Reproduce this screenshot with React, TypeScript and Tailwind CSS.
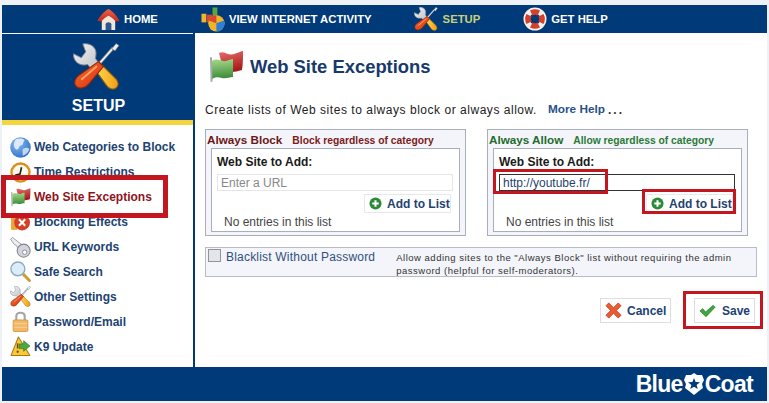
import React from 'react';

const IconTools = ({ className }: { className?: string }) => (
  <svg viewBox="0 0 48 48" className={className}>
    <defs>
      <linearGradient id="toolYellow" x1="0" y1="0" x2="1" y2="0">
        <stop offset="0" stopColor="#ffdc5a" />
        <stop offset="1" stopColor="#f29f12" />
      </linearGradient>
      <linearGradient id="toolRed" x1="0" y1="0" x2="1" y2="1">
        <stop offset="0" stopColor="#f8732c" />
        <stop offset="1" stopColor="#d92a12" />
      </linearGradient>
      <linearGradient id="toolSilver" x1="0" y1="0" x2="1" y2="1">
        <stop offset="0" stopColor="#f4f5f6" />
        <stop offset="1" stopColor="#b4b8be" />
      </linearGradient>
    </defs>
    {/* screwdriver shaft */}
    <path d="M27 21 L41 5" stroke="#7d828a" strokeWidth="3.2" />
    <path d="M27 21 L41 5" stroke="#f4f5f6" strokeWidth="1.6" />
    <path d="M39.5 6 L44 0.5 L47 2.5 L43 8 Z" fill="#eceef0" stroke="#70757c" strokeWidth="0.8" />
    {/* wrench */}
    <path d="M0.5 11 L8.5 15 L13 9 L10 1 C17 -0.5 24 4 23.5 11 L23 16 L30 25 L22 31 L15 22 C8 24 0 20 0.5 11 Z" fill="url(#toolSilver)" stroke="#80858c" strokeWidth="1" />
    <path d="M21 25 L27 20 L44 37 C47.5 41 46 45 43 46.5 C40 48 36 46 34 43 Z" fill="url(#toolYellow)" stroke="#93610a" strokeWidth="1.1" />
    {/* screwdriver handle */}
    <path d="M26 19 L31 24 L17 41 C13 46 7 47.5 3.5 44.5 C0 41 2 36 6 33 Z" fill="url(#toolRed)" stroke="#8a2608" strokeWidth="1.1" />
    <path d="M24 24 L9 37" stroke="#fda66c" strokeWidth="1.8" strokeLinecap="round" />
  </svg>
);

const IconFlag = ({ className }: { className?: string }) => (
  <svg viewBox="0 0 36 34" className={className}>
    <defs>
      <linearGradient id="flagRed" x1="0" y1="0" x2="0.3" y2="1">
        <stop offset="0" stopColor="#e87070" />
        <stop offset="1" stopColor="#a81c1c" />
      </linearGradient>
      <linearGradient id="flagGreen" x1="0" y1="0" x2="0.1" y2="1">
        <stop offset="0" stopColor="#a8dc8c" />
        <stop offset="1" stopColor="#3d8c3a" />
      </linearGradient>
    </defs>
    <path d="M11 3 C16 0 20 6 26 4 C30 3 33 1 35 1 C35 8 35 14 34 20 C30 21 27 22 24 22 L14 15 Z" fill="url(#flagRed)" />
    <path d="M4 11 C9 7 14 12 18 11 C21 10 23 9 25 9 L25 27 C21 27 18 29 14 28 C10 27 7 27 4 29 Z" fill="url(#flagGreen)" />
    <path d="M3 8 L3.5 31" stroke="#a6acaa" strokeWidth="2" strokeLinecap="round" />
  </svg>
);

const IconHome = ({ className }: { className?: string }) => (
  <svg viewBox="0 0 24 24" className={className}>
    <defs>
      <linearGradient id="homeRoof" x1="0" y1="0" x2="0" y2="1">
        <stop offset="0" stopColor="#f0604c" />
        <stop offset="1" stopColor="#c42a1c" />
      </linearGradient>
    </defs>
    <path d="M5 12 L12 7 L19 12 V23 H5 Z" fill="#efe8da" />
    <path d="M9 23 V17 C9 14 15 14 15 17 V23 Z" fill="#33558f" />
    <path d="M0.5 13.5 C3 8 8 3 12 1 C16 3 21 8 23.5 13.5 L19.5 14 C17 11 14.5 9 12 8 C9.5 9 7 11 4.5 14 Z" fill="url(#homeRoof)" />
  </svg>
);

const IconChart = ({ className }: { className?: string }) => (
  <svg viewBox="0 0 26 26" className={className}>
    <rect x="0.5" y="7" width="5" height="9" fill="#efb52c" />
    <rect x="6" y="8" width="5.5" height="8" fill="#d9482c" />
    <rect x="12" y="0.5" width="5" height="12" fill="#5ea63c" />
    <circle cx="16" cy="17" r="8.5" fill="#f0b428" />
    <path d="M16 17 L8 14 A8.5 8.5 0 0 1 16 8.5 Z" fill="#d9472c" />
    <path d="M16 17 L24 14 A8.5 8.5 0 0 1 16 25.5 Z" fill="#2f7fd6" />
  </svg>
);

const IconBuoy = ({ className }: { className?: string }) => (
  <svg viewBox="0 0 24 24" className={className}>
    <circle cx="12" cy="12" r="8.5" fill="#003a78" stroke="#f6f2ee" strokeWidth="6" />
    <path d="M7 3.5 A10.5 10.5 0 0 1 17 3.5 L14.5 8.5 A4.5 4.5 0 0 0 9.5 8.5 Z" fill="#d6402a" />
    <path d="M7 20.5 A10.5 10.5 0 0 0 17 20.5 L14.5 15.5 A4.5 4.5 0 0 1 9.5 15.5 Z" fill="#d6402a" />
    <path d="M3.5 7 A10.5 10.5 0 0 0 3.5 17 L8.5 14.5 A4.5 4.5 0 0 1 8.5 9.5 Z" fill="#d6402a" />
    <path d="M20.5 7 A10.5 10.5 0 0 1 20.5 17 L15.5 14.5 A4.5 4.5 0 0 0 15.5 9.5 Z" fill="#d6402a" />
  </svg>
);

const IconGlobe = ({ className }: { className?: string }) => (
  <svg viewBox="0 0 20 20" className={className}>
    <defs>
      <radialGradient id="globeBlue" cx="0.35" cy="0.3" r="0.8">
        <stop offset="0" stopColor="#8cbcf0" />
        <stop offset="1" stopColor="#2a6cc4" />
      </radialGradient>
    </defs>
    <circle cx="10" cy="10" r="9.8" fill="url(#globeBlue)" />
    <path d="M6 2 C9 1 12 1 14 3 C12 5 13 8 10 8 C8 9 9 12 6 12 C3 10 3 5 6 2 Z" fill="#dce9f8" />
    <path d="M13 11 C15 10 18 10 18.5 12 C17 15 14 18 12 17.5 C12.5 15 11 12 13 11 Z" fill="#c2d8f2" />
  </svg>
);

const IconClock = ({ className }: { className?: string }) => (
  <svg viewBox="0 0 20 20" className={className}>
    <circle cx="10" cy="10" r="8.6" fill="#fdf8ea" stroke="#d98f1c" strokeWidth="2.2" />
    <path d="M11 5 L9.5 11.5 L5 12.5" fill="none" stroke="#222" strokeWidth="1.6" />
  </svg>
);

const IconBlock = ({ className }: { className?: string }) => (
  <svg viewBox="0 0 20 20" className={className}>
    <rect x="1" y="2" width="6" height="15" fill="#eaa53a" />
    <circle cx="11.5" cy="10" r="7.5" fill="#d63f26" />
    <path d="M8.5 7 L14.5 13 M14.5 7 L8.5 13" stroke="#fff" strokeWidth="2" />
  </svg>
);

const IconKey = ({ className }: { className?: string }) => (
  <svg viewBox="0 0 20 20" className={className}>
    <path d="M0.5 2 L2.5 0.5 L12 8 L9 11 L7 10 L6 8 L4 7 Z" fill="#eceef2" stroke="#8d929a" strokeWidth="0.8" />
    <circle cx="13" cy="13" r="6.2" fill="#d2d5dc" stroke="#7f848c" strokeWidth="1" />
    <circle cx="14" cy="14.5" r="2.1" fill="#fff" stroke="#7f848c" strokeWidth="0.8" />
  </svg>
);

const IconSearch = ({ className }: { className?: string }) => (
  <svg viewBox="0 0 20 20" className={className}>
    <path d="M12.5 12.5 L18.5 18.5" stroke="#d09a34" strokeWidth="2.8" strokeLinecap="round" />
    <circle cx="7.5" cy="7.5" r="6.6" fill="#dcecf8" stroke="#8faabe" strokeWidth="1.3" />
  </svg>
);

const IconLock = ({ className }: { className?: string }) => (
  <svg viewBox="0 0 20 20" className={className}>
    <path d="M6 9 V5 C6 0.5 14 0.5 14 5 V9" fill="none" stroke="#a3a6a8" strokeWidth="2" />
    <rect x="3" y="8.5" width="14" height="11" rx="1" fill="#f2b868" stroke="#cf9238" strokeWidth="0.8" />
    <path d="M3.5 12 H16.5 M3.5 15.5 H16.5" stroke="#f8d49a" strokeWidth="0.8" />
  </svg>
);

const IconUpdate = ({ className }: { className?: string }) => (
  <svg viewBox="0 0 20 20" className={className}>
    <path d="M8 1 L19 18.5 H1 Z" fill="#f8c93a" stroke="#a87a14" strokeWidth="1" strokeLinejoin="round" />
    <path d="M9 7.5 H13 V4.5 L19 9.5 L13 14.5 V12 H9 Z" fill="#4fa83c" stroke="#2c7222" strokeWidth="0.6" />
    <rect x="6.5" y="7" width="1.6" height="5" fill="#7a4c0a" />
    <circle cx="7.3" cy="15" r="1.1" fill="#7a4c0a" />
  </svg>
);

const IconAdd = ({ className }: { className?: string }) => (
  <svg viewBox="0 0 14 14" className={className}>
    <circle cx="7" cy="7" r="6.5" fill="#2a8a38" />
    <path d="M7 3.5 V10.5 M3.5 7 H10.5" stroke="#fff" strokeWidth="2.2" />
  </svg>
);

const IconCross = ({ className }: { className?: string }) => (
  <svg viewBox="0 0 18 18" className={className}>
    <path d="M1 4 L4 1 L9 6 L14 1 L17 4 L12 9 L17 14 L14 17 L9 12 L4 17 L1 14 L6 9 Z" fill="#ee5a30" stroke="#b8381a" strokeWidth="0.8" strokeLinejoin="round" />
  </svg>
);

const IconCheck = ({ className }: { className?: string }) => (
  <svg viewBox="0 0 18 14" className={className}>
    <path d="M1 7 L4 4.5 L7 8 L15 1 L17 3 L7.5 13 Z" fill="#3fa83c" stroke="#1f7422" strokeWidth="0.7" strokeLinejoin="round" />
  </svg>
);

const IconBadge = ({ className }: { className?: string }) => (
  <svg viewBox="0 0 20 22" className={className}>
    <path d="M10 0 L13 2 L18 2 L20 7 L18 11 L19 15 L15 18 L10 22 L5 18 L1 15 L2 11 L0 7 L2 2 L7 2 Z" fill="#fff" />
    <path d="M10 5 L11.6 9 L16 9.2 L12.6 11.9 L13.8 16 L10 13.7 L6.2 16 L7.4 11.9 L4 9.2 L8.4 9 Z" fill="#003a78" />
  </svg>
);

const navItems = [
  { label: 'HOME', Icon: IconHome, icon: 'w-[23px] h-[23px]', wrap: 'ml-[95px] gap-[4px]', text: 'text-white' },
  { label: 'VIEW INTERNET ACTIVITY', Icon: IconChart, icon: 'w-[25px] h-[25px]', wrap: 'ml-[43px] gap-[3px]', text: 'text-white' },
  { label: 'SETUP', Icon: IconTools, icon: 'w-[24px] h-[24px]', wrap: 'ml-[42px] gap-[5px]', text: 'text-[#c9d07c]' },
  { label: 'GET HELP', Icon: IconBuoy, icon: 'w-[24px] h-[24px]', wrap: 'ml-[43px] gap-[4px]', text: 'text-white' },
];

const sideItems = [
  { label: 'Web Categories to Block', Icon: IconGlobe, active: false },
  { label: 'Time Restrictions', Icon: IconClock, active: false },
  { label: 'Web Site Exceptions', Icon: IconFlag, active: true },
  { label: 'Blocking Effects', Icon: IconBlock, active: false },
  { label: 'URL Keywords', Icon: IconKey, active: false },
  { label: 'Safe Search', Icon: IconSearch, active: false },
  { label: 'Other Settings', Icon: IconTools, active: false },
  { label: 'Password/Email', Icon: IconLock, active: false },
  { label: 'K9 Update', Icon: IconUpdate, active: false },
];

const ListBox = ({
  title,
  sub,
  titleColor,
  subColor,
  placeholder,
  value,
  inputClass,
  redBoxes,
}: {
  title: string;
  sub: string;
  titleColor: string;
  subColor: string;
  placeholder?: string;
  value?: string;
  inputClass: string;
  redBoxes?: boolean;
}) => (
  <div className="relative w-[261px] h-[107px] border border-[#a9aebd] bg-[#f4f5fa] pt-px px-[5px]">
    <div className="h-[17px] flex items-baseline -ml-[4px] whitespace-nowrap">
      <span className={`text-[11.7px] font-bold ${titleColor}`}>{title}</span>
      <span className={`ml-[10px] text-[10.3px] font-bold ${subColor}`}>{sub}</span>
    </div>
    <div className="h-[84px] border border-[#a9aebd] bg-white px-[5px] pt-[6px]">
      <div className="text-[12px] leading-[14px] font-bold text-[#1a1a1a]">Web Site to Add:</div>
      <div className={`mt-[5px] w-[236px] h-[17px] text-[12px] leading-[16px] pl-[3px] ${inputClass}`}>
        {value ?? placeholder}
      </div>
      <div className="flex justify-end mt-[3px] pr-[3px]">
        <div className="w-[87px] h-[19px] border border-[#e6e8ee] flex items-center pl-[4px] gap-[5px] whitespace-nowrap">
          <IconAdd className="w-[13px] h-[13px] shrink-0" />
          <span className="text-[12px] font-bold text-[#1f4272]">Add to List</span>
        </div>
      </div>
      <div className="ml-[7px] text-[12px] leading-[14px] mt-[2px] text-[#444]">No entries in this list</div>
    </div>
    {redBoxes && (
      <>
        <div className="absolute left-[5px] top-[39px] w-[115px] h-[25px] border-[3px] border-[#c4161f]" />
        <div className="absolute left-[154px] top-[59px] w-[94px] h-[25px] border-[3px] border-[#c4161f]" />
      </>
    )}
  </div>
);

export default function App() {
  return (
    <div className="relative w-[769px] h-[403px] bg-[#eef1f6] pt-[5px] pb-[2px] pl-[2px] pr-[2px] flex flex-col font-['Liberation_Sans',Arial,sans-serif] overflow-hidden">
      {/* Top nav */}
      <div className="h-[28px] shrink-0 bg-[#003a78] flex items-center text-[11.3px] font-bold">
        {navItems.map(({ label, Icon, icon, wrap, text }) => (
          <div key={label} className={`flex items-center ${wrap}`}>
            <Icon className={icon} />
            <span className={text}>{label}</span>
          </div>
        ))}
      </div>

      <div className="flex flex-1 min-h-0 bg-white">
        {/* Sidebar */}
        <div className="w-[191px] shrink-0 border-r-2 border-[#003a78] box-content flex flex-col">
          <div className="h-[87px] bg-[#003a78] flex flex-col items-center pt-[9px] border-t border-white">
            <IconTools className="w-[47px] h-[47px] -ml-[2px]" />
            <div className="mt-[4px] ml-[2px] text-[16px] font-bold text-white">SETUP</div>
          </div>
          <div className="h-[5px] bg-[#f4d63c]" />
          <div className="pt-[10px] pl-[8px]">
            {sideItems.map(({ label, Icon, active }) => (
              <div key={label} className="h-[24.9px] flex items-center">
                <div className="w-[24px] flex justify-start">
                  <Icon className="w-[21px] h-[21px]" />
                </div>
                <span className={`text-[12px] font-bold ${active ? 'text-[#8e1420]' : 'text-[#214271]'}`}>{label}</span>
              </div>
            ))}
          </div>
        </div>

        {/* Main */}
        <div className="flex-1 pl-[10px] pt-[17px]">
          <div className="flex items-center h-[33px] pl-[3px]">
            <IconFlag className="w-[36px] h-[34px] shrink-0" />
            <h1 className="ml-[6px] text-[18.4px] font-bold text-[#17396b]">Web Site Exceptions</h1>
          </div>
          <div className="mt-[20px] h-[14px] flex items-center whitespace-nowrap text-[12px] tracking-[0.53px] text-[#222]">
            <span>Create lists of Web sites to always block or always allow.</span>
            <span className="ml-[11px] text-[11.8px] font-bold tracking-normal text-[#29508a]">More Help</span>
            <span className="ml-[3px] tracking-[2px] font-bold text-[#333]">...</span>
          </div>

          <div className="flex gap-[21px] mt-[12px]">
            <ListBox
              title="Always Block"
              sub="Block regardless of category"
              titleColor="text-[#6b1717]"
              subColor="text-[#7d1a1a]"
              placeholder="Enter a URL"
              inputClass="border border-[#e4e6ea] text-[#888]"
            />
            <ListBox
              title="Always Allow"
              sub="Allow regardless of category"
              titleColor="text-[#1f6b2a]"
              subColor="text-[#2a7a36]"
              value="http://youtube.fr/"
              inputClass="border border-[#333] text-[#1f3f6e]"
              redBoxes
            />
          </div>

          <div className="mt-[11px] w-[552px] h-[30px] border border-[#b8bcc8] bg-[#f4f5fa] flex relative">
            <div className="mt-[1px] ml-[2px] w-[13px] h-[13px] border border-[#8f939a] bg-[#e4e5e8]" />
            <span className="ml-[5px] text-[12px] leading-[18px] tracking-[0.2px] text-[#31507c]">Blacklist Without Password</span>
            <p className="ml-[21px] mt-[3px] text-[9.5px] leading-[13px] tracking-[0.5px] text-[#333] whitespace-nowrap">
              Allow adding sites to the "Always Block" list without requiring the admin
              <br />
              password (helpful for self-moderators).
            </p>
          </div>

          <div className="flex justify-end mt-[21px] pr-[12px] relative">
            <div className="w-[71px] h-[25px] border border-[#dcdee4] flex items-center pl-[4px] gap-[5px]">
              <IconCross className="w-[17px] h-[17px]" />
              <span className="text-[12px] font-bold text-[#214271]">Cancel</span>
            </div>
            <div className="ml-[23px] w-[61px] h-[25px] border border-[#dcdee4] flex items-center pl-[4px] gap-[6px]">
              <IconCheck className="w-[17px] h-[14px]" />
              <span className="text-[12px] font-bold text-[#214271]">Save</span>
            </div>
          </div>
        </div>
      </div>

      {/* Footer */}
      <div className="h-[34px] shrink-0 bg-[#003a78] flex items-center justify-end pr-[14px]">
        <span className="text-[23px] font-bold tracking-[-0.7px] text-white">Blue</span>
        <IconBadge className="w-[20px] h-[22px] mx-[1px]" />
        <span className="text-[23px] font-bold tracking-[-0.7px] text-white">Coat</span>
      </div>

      {/* Annotation boxes */}
      <div className="absolute left-[1px] top-[175px] w-[167px] h-[43px] border-[5px] border-[#c4161f]" />
      <div className="absolute left-[683px] top-[291px] w-[80px] h-[38px] border-[3px] border-[#c4161f]" />
    </div>
  );
}
